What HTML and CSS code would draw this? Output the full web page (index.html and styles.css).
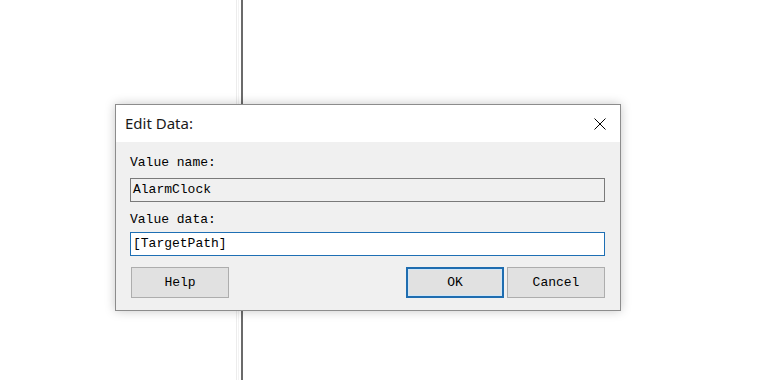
FILE: index.html
```html
<!DOCTYPE html>
<html lang="en">
<head>
    <meta charset="UTF-8">
    <meta name="viewport" content="width=device-width, initial-scale=1.0">
    <title>Edit Data</title>
    <link rel="stylesheet" href="styles.css">
</head>
<body>
    <div class="desktop">
        <div class="tree-pane"></div>
        <div class="splitter"></div>
        <div class="list-pane"></div>
    </div>

    <div class="dialog">
        <div class="title-bar">
            <span class="title">Edit Data:</span>
            <button class="close" aria-label="Close">
                <svg width="12" height="12" viewBox="0 0 12 12">
                    <path d="M0.5 0.5 L11.5 11.5 M11.5 0.5 L0.5 11.5" stroke="#000" stroke-width="1" fill="none"/>
                </svg>
            </button>
        </div>
        <div class="dialog-body">
            <label class="field-label label-name">Value name:</label>
            <div class="field readonly">AlarmClock</div>
            <label class="field-label label-data">Value data:</label>
            <div class="field focused">[TargetPath]</div>
            <div class="actions">
                <button class="btn">Help</button>
                <div class="right-buttons">
                    <button class="btn default">OK</button>
                    <button class="btn">Cancel</button>
                </div>
            </div>
        </div>
    </div>
</body>
</html>
```

FILE: styles.css
```css
* {
    margin: 0;
    padding: 0;
    box-sizing: border-box;
}

body {
    width: 770px;
    height: 380px;
    overflow: hidden;
    background-color: #ffffff;
    font-family: 'Liberation Mono', monospace;
    color: #000;
}

.desktop {
    display: flex;
    height: 380px;
}

.tree-pane {
    width: 237px;
    border-right: 1px solid #ececec;
}

.splitter {
    width: 5px;
    margin-left: 1px;
    border-right: 2px solid #6b6b6b;
    border-left: 1px solid #f3f3f3;
}

.list-pane {
    flex: 1;
}

/* dialog window floating over the app */
.dialog {
    position: absolute;
    left: 115px;
    top: 104px;
    width: 506px;
    height: 207px;
    border: 1px solid #8c8c8c;
    background-color: #f0f0f0;
    box-shadow: 0 0 10px rgba(0, 0, 0, 0.22);
    display: flex;
    flex-direction: column;
}

.title-bar {
    height: 37px;
    background-color: #ffffff;
    display: flex;
    align-items: center;
    justify-content: space-between;
    padding-left: 9px;
    padding-right: 14px;
}

.title {
    font-family: 'Noto Sans', sans-serif;
    font-size: 15px;
    color: #1a1a1a;
    padding-bottom: 1px;
}

.close {
    border: none;
    background: none;
    width: 12px;
    height: 12px;
    display: flex;
}

.dialog-body {
    padding: 13px 15px 0 14px;
    font-size: 13px;
}

.field-label {
    display: block;
    line-height: 16px;
}

.label-name {
    margin-bottom: 7px;
}

.label-data {
    margin-top: 10px;
    margin-bottom: 4px;
}

.field {
    height: 24px;
    line-height: 22px;
    padding-left: 2px;
    border: 1px solid #7a7a7a;
    white-space: nowrap;
}

.field.readonly {
    background-color: #f0f0f0;
}

.field.focused {
    background-color: #ffffff;
    border-color: #1e6fb4;
}

.actions {
    display: flex;
    justify-content: space-between;
    margin-top: 11px;
    padding-left: 1px;
}

.right-buttons {
    display: flex;
    gap: 3px;
}

.btn {
    width: 98px;
    height: 31px;
    font-family: 'Liberation Mono', monospace;
    font-size: 13px;
    color: #000;
    background-color: #e1e1e1;
    border: 1px solid #adadad;
}

.btn.default {
    border: 2px solid #1f6db0;
    box-shadow: inset 0 0 0 1px #cfe6f8;
}
```
